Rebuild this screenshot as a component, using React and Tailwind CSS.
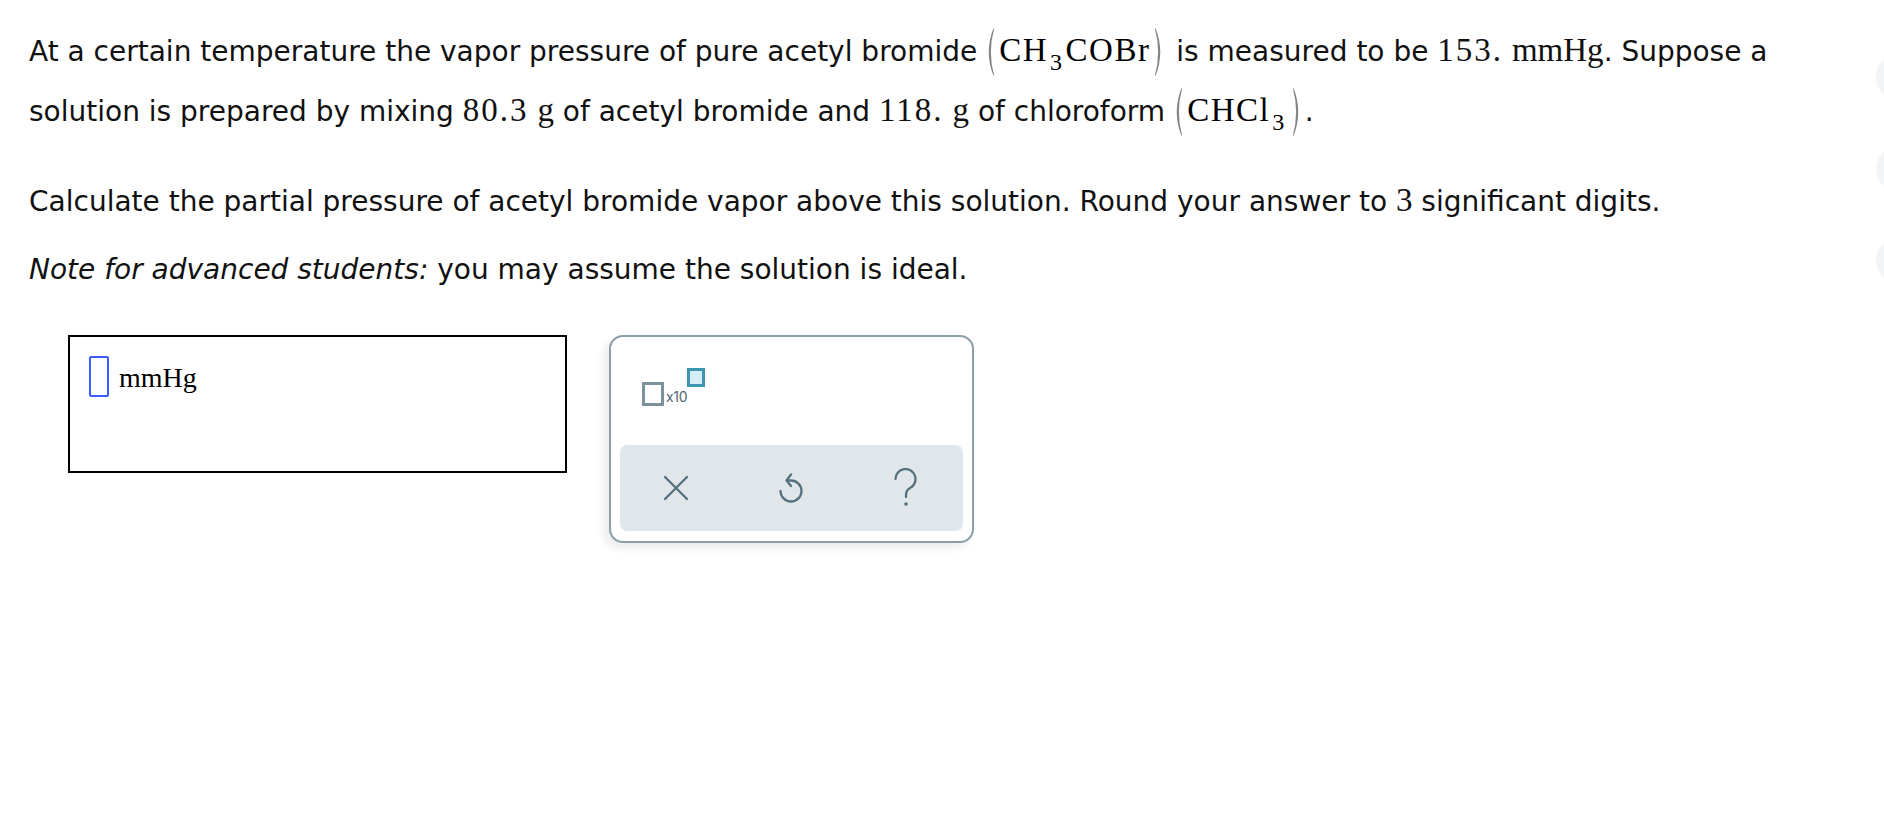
import { Fragment } from 'react'

const sans = "font-['DejaVu_Sans',Verdana,sans-serif]"
const serif = "font-['Liberation_Serif','Times_New_Roman',serif]"

function Paren({ right }) {
  return (
    <svg width={11} height={50} viewBox="0 0 11 50" className="inline-block align-[-16px]">
      {right ? (
        <path d="M1.5 1 Q11 25 1.5 49 L1 48 Q7.2 25 1 2 Z" fill="#858585" />
      ) : (
        <path d="M9.5 1 Q0 25 9.5 49 L10 48 Q3.8 25 10 2 Z" fill="#858585" />
      )}
    </svg>
  )
}

function Formula({ parts }) {
  return (
    <span className="ml-[7px] mr-[2px] whitespace-nowrap leading-none">
      <Paren />
      <span className={`${serif} text-[33px] leading-none text-black mx-[4px] tracking-[1.5px]`}>
        {parts.map((p, i) => (
          <Fragment key={i}>
            {p.sub ? <span className="text-[24px] relative top-[9px] mx-[2px]">{p.t}</span> : p.t}
          </Fragment>
        ))}
      </span>
      <Paren right />
    </span>
  )
}

function M({ children, num }) {
  return <span className={`${serif} text-[33px] leading-none ${num ? 'tracking-[2px]' : ''}`}>{children}</span>
}

export default function App() {
  return (
    <div className={`relative min-h-screen bg-white text-[#111] ${sans} text-[28px] pl-[29px] pt-[22px] overflow-hidden`}>
      <p className="leading-[60px]">
        At a certain temperature the vapor pressure of pure acetyl bromide
        <Formula parts={[{ t: 'CH' }, { t: '3', sub: true }, { t: 'COBr' }]} />
        {' '}is measured to be <M num>153.</M> <M>mmHg</M>. Suppose a
        <br />
        solution is prepared by mixing <M num>80.3</M> <M>g</M> of acetyl bromide and <M num>118.</M> <M>g</M> of chloroform
        <Formula parts={[{ t: 'CHCl' }, { t: '3', sub: true }]} />.
      </p>

      <p className="leading-[40px] mt-[40px]">
        Calculate the partial pressure of acetyl bromide vapor above this solution. Round your answer to <M>3</M> significant digits.
      </p>

      <p className="leading-[40px] mt-[28px]">
        <i>Note for advanced students:</i> you may assume the solution is ideal.
      </p>

      <div className="flex items-start gap-[42px] mt-[45px] ml-[39px]">
        {/* answer box */}
        <div className="w-[499px] h-[138px] border-2 border-black pl-[19px] pt-[19px]">
          <div className="flex items-end gap-[10px]">
            <span className="w-[20px] h-[41px] border-2 border-[#3b5bff] rounded-[2px]" />
            <span className={`${serif} text-[28px] leading-none mb-[5px] text-black`}>mmHg</span>
          </div>
        </div>

        {/* keypad */}
        <div className="w-[365px] h-[208px] rounded-[14px] border-2 border-[#8b9fa8] bg-white shadow-[-5px_5px_8px_rgba(0,0,0,0.08)] flex flex-col px-[9px] pb-[10px]">
          <div className="h-[108px] pl-[22px] pt-[31px]">
            <div className="flex items-start">
              <span className="mt-[14px] w-[22px] h-[24px] border-[3px] border-[#7b929c]" />
              <span className="mt-[22px] ml-[2px] text-[14px] leading-none text-[#4f6873] font-['Inter',sans-serif] tracking-tight">x10</span>
              <span className="w-[18px] h-[19px] border-[3px] border-[#3d97b0] bg-[#d4eef3]" />
            </div>
          </div>
          <div className="flex-1 rounded-[7px] bg-[#e0e6e9] flex items-center pl-[43px] gap-[88px] text-[#557180]">
            <svg width={26} height={26} viewBox="0 0 26 26" fill="none" stroke="currentColor" strokeWidth={2.3} strokeLinecap="round">
              <path d="M2 2 L24 24 M24 2 L2 24" />
            </svg>
            <svg width={28} height={34} viewBox="0 0 28 34" fill="none" stroke="currentColor" strokeWidth={2.3} strokeLinecap="round" strokeLinejoin="round">
              <path d="M3.5 20 A10.5 10.5 0 1 0 14 9.5 H10" />
              <path d="M14 3.5 L9.5 9.5 L14 15" />
            </svg>
            <svg width={26} height={40} viewBox="0 0 26 40" fill="none" stroke="currentColor" strokeWidth={2.3} strokeLinecap="round">
              <path d="M2.5 11 A10 10 0 1 1 17 20 C13.5 22 13 24 13 27 V29" />
              <circle cx={13} cy={36} r={1.8} fill="currentColor" stroke="none" />
            </svg>
          </div>
        </div>
      </div>

      {/* side buttons peeking in at the right edge */}
      <div className="absolute left-[1876px] top-[53px] w-[50px] h-[48px] rounded-full bg-[#f3f4f6]" />
      <div className="absolute left-[1876px] top-[146px] w-[50px] h-[46px] rounded-full bg-[#f3f4f6]" />
      <div className="absolute left-[1876px] top-[237px] w-[50px] h-[47px] rounded-full bg-[#f3f4f6]" />
    </div>
  )
}
